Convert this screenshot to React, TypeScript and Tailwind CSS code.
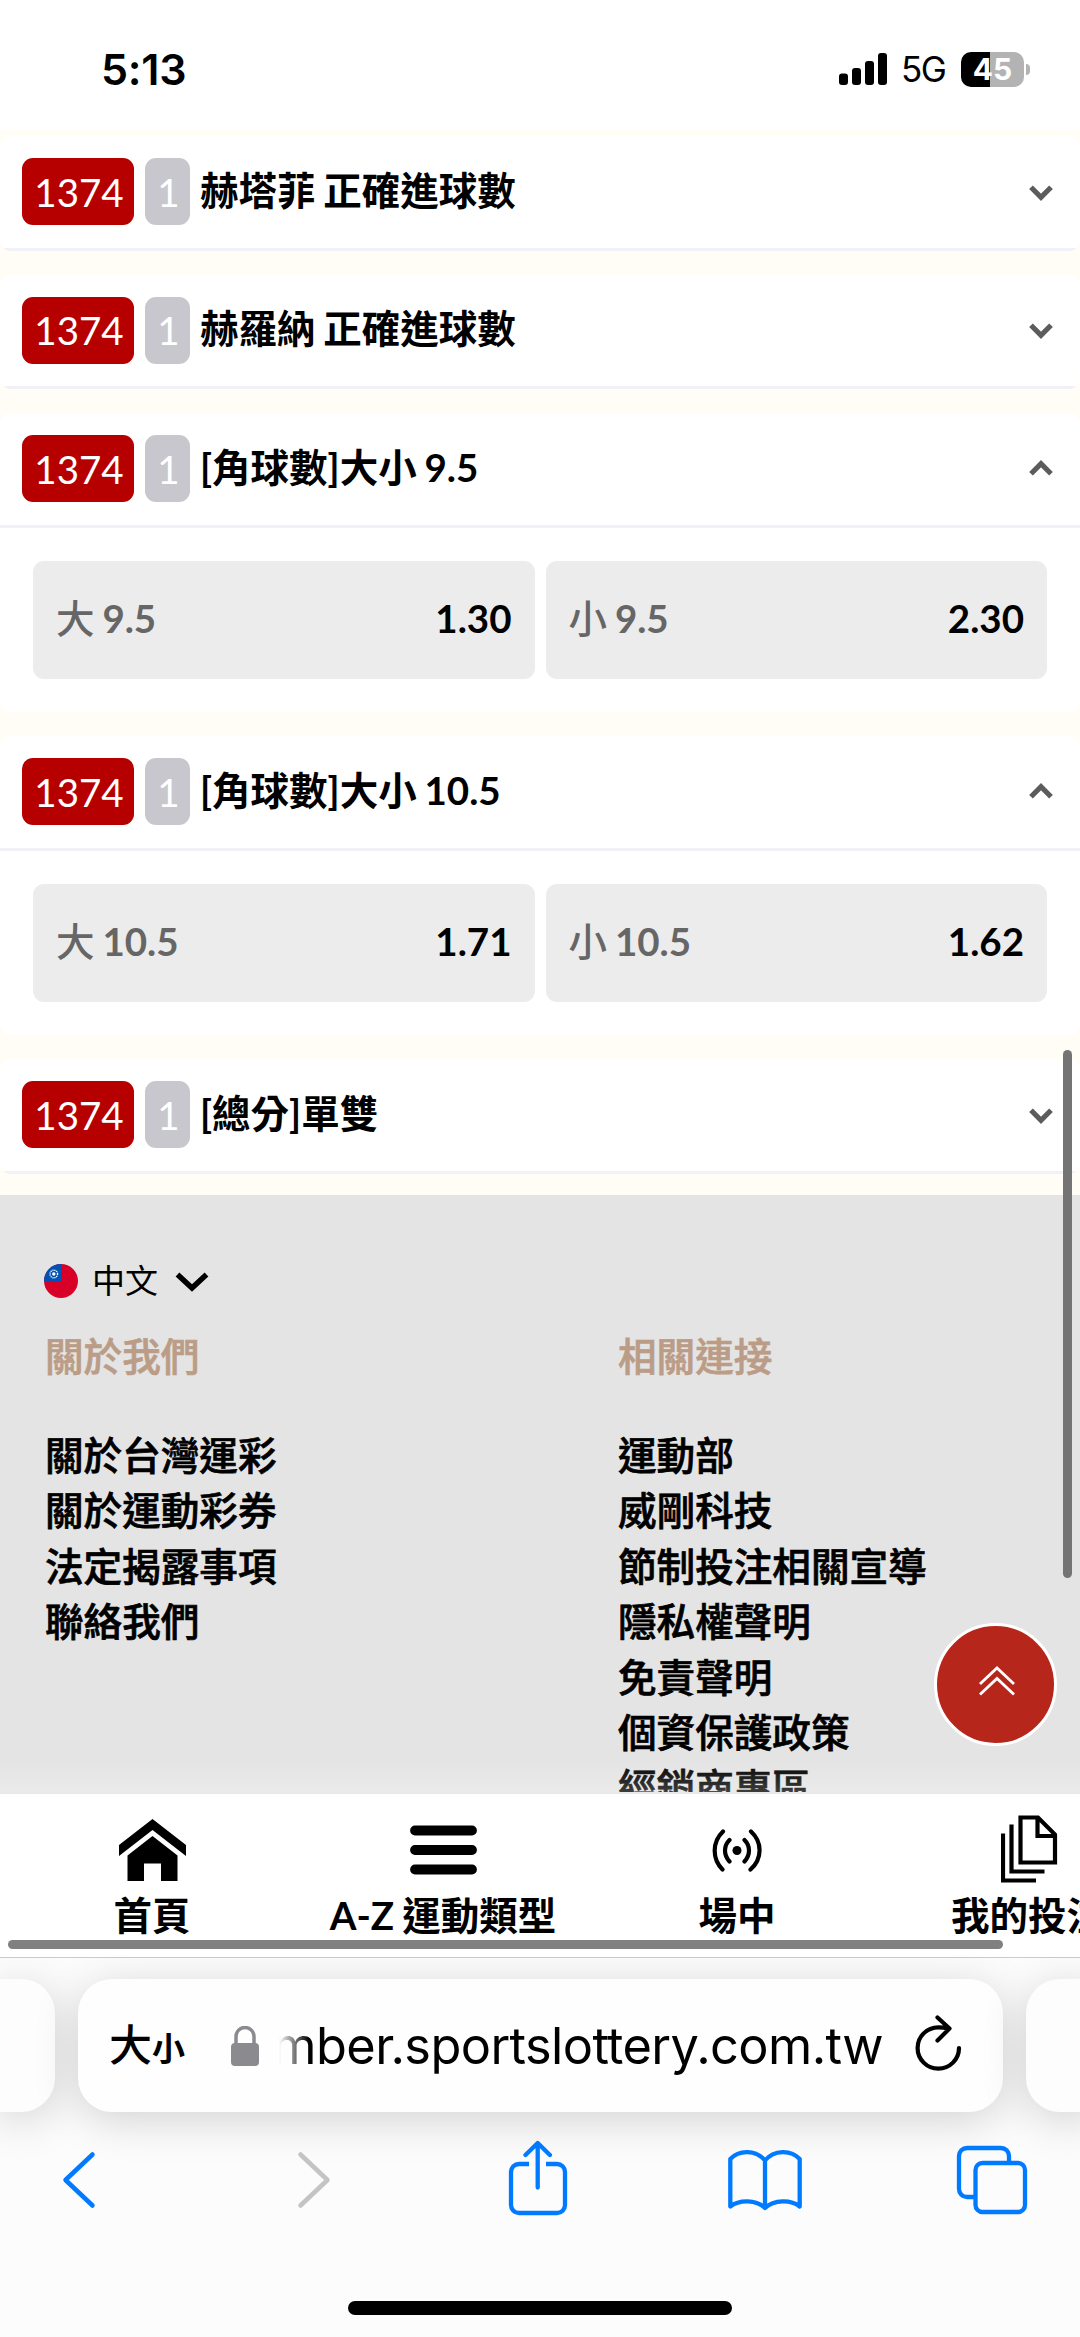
import { ReactNode } from 'react';

type Option = { label: string; line: string; odds: string };

const betTypes: { title: string; options?: Option[] }[] = [
  { title: '赫塔菲 正確進球數' },
  { title: '赫羅納 正確進球數' },
  {
    title: '[角球數]大小 9.5',
    options: [
      { label: '大', line: '9.5', odds: '1.30' },
      { label: '小', line: '9.5', odds: '2.30' },
    ],
  },
  {
    title: '[角球數]大小 10.5',
    options: [
      { label: '大', line: '10.5', odds: '1.71' },
      { label: '小', line: '10.5', odds: '1.62' },
    ],
  },
  { title: '[總分]單雙' },
];

const footerColumns = [
  {
    heading: '關於我們',
    links: ['關於台灣運彩', '關於運動彩券', '法定揭露事項', '聯絡我們'],
  },
  {
    heading: '相關連接',
    links: ['運動部', '威剛科技', '節制投注相關宣導', '隱私權聲明', '免責聲明', '個資保護政策', '經銷商專區'],
  },
];

function StatusBar() {
  return (
    <header className="flex h-[130px] shrink-0 items-center justify-between bg-white pt-2 pr-[50px] pl-[101px] font-['Inter',sans-serif]">
      <span className="text-[43px] font-semibold tracking-[-0.2px]">5:13</span>
      <div className="flex items-center">
        <svg width="48" height="32" viewBox="0 0 48 32">
          <rect x="0" y="20.5" width="9" height="11.5" rx="3" />
          <rect x="13" y="15" width="9" height="17" rx="3" />
          <rect x="26" y="8" width="9" height="24" rx="3" />
          <rect x="39" y="0" width="9" height="32" rx="3" />
        </svg>
        <span className="ml-[14px] w-[48px] text-[35px] font-normal tracking-[-1.5px]">5G</span>
        <div className="ml-[12px] flex h-[35px] w-[63px] items-center justify-center rounded-[10px] bg-linear-to-r from-black from-46% to-[#b3b3b3] to-46% text-[30px] font-bold text-white">
          45
        </div>
        <div className="ml-[2px] h-[11px] w-[4px] rounded-r-full bg-[#b3b3b3]" />
      </div>
    </header>
  );
}

function BetCard({ title, options }: { title: string; options?: Option[] }) {
  return (
    <section className="overflow-hidden rounded-[11px] bg-white">
      <div className="flex h-[114.5px] items-center border-b-[3px] border-[#f1f1f8] pr-[26px] pl-[22px]">
        <span className="flex h-[67px] w-[112px] items-center justify-center rounded-[11px] bg-[#b60000] pt-[2px] pl-[2px] text-[38.5px] text-white">
          1374
        </span>
        <span className="ml-[11px] flex h-[67px] w-[45px] items-center justify-center rounded-[11px] bg-[#c8c7ce] pt-[2px] pl-[2px] text-[38.5px] text-white">
          1
        </span>
        <h3 className="ml-[10px] flex-1 pb-[2px] text-[38.5px] font-bold [word-spacing:-1.5px]">{title}</h3>
        <svg className={options ? '' : 'rotate-180'} width="26" height="20" viewBox="0 0 26 20" fill="none" stroke="#5c5c5c" strokeWidth="5.2">
          <path d="M3 14.75 13 4.75l10 10" />
        </svg>
      </div>
      {options && (
        <div className="flex h-[184.5px] gap-[11px] px-[33px] pt-[33px]">
          {options.map((option) => (
            <button
              key={option.label}
              className="flex h-[118px] flex-1 items-center justify-between rounded-[11px] bg-[#ececec] px-[23px] pb-[2px] text-[38.5px] font-bold"
            >
              <span className="text-[#666] [word-spacing:-1.5px]">
                <span className="font-medium">{option.label}</span> {option.line}
              </span>
              <span>{option.odds}</span>
            </button>
          ))}
        </div>
      )}
    </section>
  );
}

function SiteFooter() {
  return (
    <footer className="relative mt-[21.5px] flex-1 overflow-hidden bg-[#e4e4e4] pt-[60px]">
      <div className="flex h-[52px] items-center pl-[44px]">
        <svg width="34" height="34" viewBox="0 0 34 34">
          <clipPath id="flag">
            <circle cx="17" cy="17" r="17" />
          </clipPath>
          <g clipPath="url(#flag)">
            <path fill="#d80027" d="M0 0h34v34H0z" />
            <path fill="#0052b4" d="M0 0h17.5v17H0z" />
            <circle cx="9.8" cy="10" r="3.8" fill="none" stroke="#fff" strokeWidth="1.3" strokeDasharray="1.2 .8" />
            <circle cx="9.8" cy="10" r="1.7" fill="#fff" />
          </g>
        </svg>
        <span className="ml-[14px] text-[33px]">中文</span>
        <svg className="mt-[2px] ml-[17px]" width="34" height="20" viewBox="0 0 34 20" fill="none" stroke="#000" strokeWidth="5.5">
          <path d="m2.500 2.500 14.500 13.500 14.500-13.500" />
        </svg>
      </div>
      <div className="grid grid-cols-[573px_1fr] pt-[21.5px] pl-[45px] text-[38.6px] leading-[55.4px] font-medium [-webkit-text-stroke:0.7px]">
        {footerColumns.map((column) => (
          <div key={column.heading}>
            <h4 className="mb-[44px] text-[#bb9c87]">{column.heading}</h4>
            {column.links.map((link) => (
              <div key={link}>{link}</div>
            ))}
          </div>
        ))}
      </div>
      <div className="absolute inset-x-0 bottom-0 h-[34px] bg-linear-to-b from-white/0 to-white/25" />
      <div className="absolute inset-x-0 bottom-0 h-[2px] bg-[#e9e9e9]" />
    </footer>
  );
}

function NavItem({ label, className, children }: { label: string; className: string; children: ReactNode }) {
  return (
    <div className={`flex shrink-0 flex-col items-center ${className}`}>
      <div className="flex h-[68px] items-center">{children}</div>
      <span className="mt-[6px] leading-[50px] whitespace-nowrap">{label}</span>
    </div>
  );
}

function BottomNav() {
  return (
    <nav className="relative flex h-[163px] shrink-0 overflow-hidden bg-white pt-[22px] text-[38.5px] font-bold [word-spacing:-1px]">
      <NavItem label="首頁" className="ml-[102px] w-[100px]">
        <svg width="67" height="62" viewBox="0 0 67 62">
          <path d="M0 26 33.500 0 67 26v11L33.500 11 0 37z" />
          <path d="M8.500 36.500 33.500 17l25 19.500V62H42V44.500H25V62H8.500z" />
        </svg>
      </NavItem>
      <NavItem label="A-Z 運動類型" className="ml-[91px] w-[300px]">
        <svg className="mb-px" width="67" height="50" viewBox="0 0 67 50" stroke="#000" strokeWidth="9.8" strokeLinecap="round">
          <path d="M5 5.500h57M5 25h57M5 44.500h57" />
        </svg>
      </NavItem>
      <NavItem label="場中" className="ml-[94px] w-[100px]">
        <svg width="52" height="43" viewBox="0 0 52 43" fill="none" stroke="#000" strokeWidth="4.2" strokeLinecap="round">
          <circle cx="26" cy="21.500" r="4.500" fill="#000" stroke="none" />
          <path d="M12 2.500C1 13 1 30 11.500 40.500M40 2.500C51.500 13 51.500 30 39.500 40.500M18.500 11c-6 6-6 15 0 21.500M33.500 11c6 6 6 15 0 21.500" />
        </svg>
      </NavItem>
      <NavItem label="我的投注" className="ml-[156px] w-[170px]">
        <svg className="mb-[2px] -mr-[2px]" width="57" height="68" viewBox="0 0 57 68" fill="none" stroke="#000" strokeWidth="4.200">
          <path d="M19.500 2.500H37L54 19.500V47.500H19.500zM36.500 2.500V21H54M10.500 9.500V56.500H43.500M2 18.500V65.500H35" />
        </svg>
      </NavItem>
      <div className="absolute bottom-[8px] left-[8px] h-[9px] w-[995px] rounded-full bg-[#808080]" />
    </nav>
  );
}

function BrowserBar() {
  return (
    <div className="flex h-[380px] shrink-0 flex-col border-t border-[#cccccc] bg-[#fcfcfc]">
      <div className="mt-[21px] flex h-[133px] w-[1136px] shrink-0 gap-[23px] font-['Inter','Noto_Sans_CJK_TC',sans-serif]">
        <div className="w-[55px] rounded-r-[34px] bg-[#fdfdfd] shadow-[0_8px_44px_#0000002b]" />
        <div className="flex w-[925px] items-center rounded-[34px] bg-[#fefefe] pl-[31px] shadow-[0_8px_44px_#0000002b]">
          <span className="w-[78px] text-[43px] font-medium whitespace-nowrap">
            大<span className="text-[33px] font-bold">小</span>
          </span>
          <svg className="ml-[44px] shrink-0" width="28" height="40" viewBox="0 0 28 40">
            <rect y="17" width="28" height="23" rx="4" fill="#8b8a8f" />
            <path d="M5 19v-8.500a9 9 0 0 1 18 0V19" fill="none" stroke="#8b8a8f" strokeWidth="3.500" />
          </svg>
          <div className="ml-[20px] flex w-[604px] shrink-0 justify-end overflow-hidden mask-[linear-gradient(to_right,transparent,black_30px)]">
            <span className="text-[50.5px] leading-[70px] tracking-[-0.6px] whitespace-nowrap">mber.sportslottery.com.tw</span>
          </div>
          <svg className="-mt-[3px] ml-[31px] shrink-0" width="48" height="58" viewBox="0 0 48 58" fill="none" stroke="#000" strokeWidth="4.2" strokeLinecap="round" strokeLinejoin="round">
            <path d="M45 33A20.700 20.700 0 1 1 24.300 12.300Q29 12.300 35 13.500M23.500 2.500 35.500 13.500 23.500 25.500" />
          </svg>
        </div>
        <div className="w-[70px] rounded-l-[34px] bg-[#fdfdfd] shadow-[0_8px_44px_#0000002b]" />
      </div>
      <div className="flex h-[136px] shrink-0 items-center pl-[62px] text-[#007aff]">
        <svg width="34" height="58" viewBox="0 0 34 58" fill="none" stroke="currentColor" strokeWidth="4.500" strokeLinecap="round" strokeLinejoin="round">
          <path d="M30.500 3.500 3.500 29l27 25.500" />
        </svg>
        <svg className="ml-[201px] text-[#c4c4c6]" width="34" height="58" viewBox="0 0 34 58" fill="none" stroke="currentColor" strokeWidth="4.500" strokeLinecap="round" strokeLinejoin="round">
          <path d="m3.500 3.500 27 25.500-27 25.500" />
        </svg>
        <svg className="-mt-[4px] ml-[177px]" width="60" height="76" viewBox="0 0 60 76" fill="none" stroke="currentColor" strokeWidth="4.300" strokeLinejoin="round">
          <path d="M21 24H11a8 8 0 0 0-8 8v33a8 8 0 0 0 8 8h38a8 8 0 0 0 8-8V32a8 8 0 0 0-8-8H38" />
          <path strokeLinecap="round" d="M29.700 47.500V4M17.500 15 29.700 3l12.200 12" />
        </svg>
        <svg className="ml-[159px]" width="76" height="62" viewBox="0 0 76 62" fill="none" stroke="currentColor" strokeWidth="4.300" strokeLinecap="round" strokeLinejoin="round">
          <path d="M38 11.500C29 .5 12 .5 3.300 10v47.500c9-7 26-7 34.700 1.500 9-8.500 26-8.500 34.700-1.500V10C64 .5 47 .5 38 11.500zV59" />
        </svg>
        <svg className="ml-[153px]" width="72" height="70" viewBox="0 0 72 70" fill="none" stroke="currentColor" strokeWidth="4.300">
          <rect x="19.500" y="18" width="49.500" height="49" rx="7" />
          <path d="M19 52h-8a8 8 0 0 1-8-8V11a8 8 0 0 1 8-8h34a8 8 0 0 1 8 8v6" />
        </svg>
      </div>
      <div className="mx-auto mt-[53px] h-[14px] w-[384px] shrink-0 rounded-full bg-black" />
    </div>
  );
}

export default function App() {
  return (
    <div className="relative flex h-[2337px] w-[1080px] flex-col overflow-hidden bg-[#fffdf5] font-['Lato','Noto_Sans_CJK_TC',sans-serif] text-black">
      <StatusBar />
      <main className="mt-[6px] flex shrink-0 flex-col gap-[24px]">
        {betTypes.map((bet) => (
          <BetCard key={bet.title} {...bet} />
        ))}
      </main>
      <SiteFooter />
      <BottomNav />
      <BrowserBar />

      {/* Page scroll indicator */}
      <div className="absolute top-[1050px] right-[8px] h-[528px] w-[9px] rounded-full bg-[#747474]" />

      {/* Back to top */}
      <button className="absolute top-[1623px] left-[934px] flex size-[123px] items-center justify-center rounded-full border-[3px] border-white bg-[#b7261b] pb-[8px] pl-[3px]">
        <svg width="38" height="32" viewBox="0 0 38 32" fill="none" stroke="#fff" strokeWidth="2.800">
          <path d="M2 19 19 3l17 16M2 29.500l17-16 17 16" />
        </svg>
      </button>
    </div>
  );
}
